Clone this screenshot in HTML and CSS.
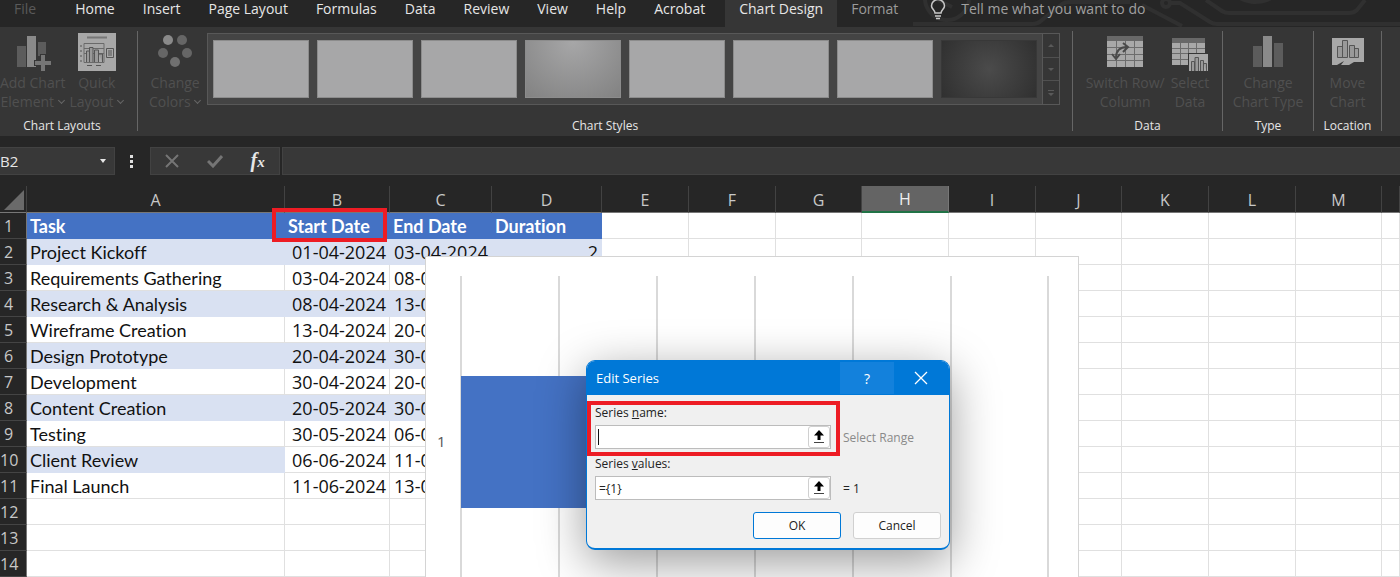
FILE: index.html
```html
<!DOCTYPE html>
<html lang="en">
<head>
    <title>Book1 - Excel</title>
    <meta charset="UTF-8">
    <meta name="viewport" content="width=device-width, initial-scale=1">
    <link rel="stylesheet" href="styles.css">
</head>
<body>
    <nav class="tabs">
        <svg class="circuit" width="490" height="27" viewBox="0 0 490 27" fill="none" stroke="#303030" stroke-width="4">
            <path d="M3 24h119q6 0 10-4l20-16q3-2 8-2h60"/>
            <path d="M15 -4a22 22 0 0 0 44 4"/>
            <path d="M28 0l14 7"/>
            <circle cx="256" cy="3" r="4"/>
            <path d="M232 5l40 21M260 3h10l30 19q3 2 7 2h184"/>
            <path d="M296 0l16 11q3 2 7 2h120q5 0 8-3l8-10"/>
            <path d="M320 -14a26 20 0 0 0 48 6z" fill="#303030"/>
        </svg>
        <a class="tab tab-file" href="#">File</a>
        <a class="tab tab-home" href="#">Home</a>
        <a class="tab" href="#">Insert</a>
        <a class="tab" href="#">Page Layout</a>
        <a class="tab" href="#">Formulas</a>
        <a class="tab" href="#">Data</a>
        <a class="tab" href="#">Review</a>
        <a class="tab" href="#">View</a>
        <a class="tab" href="#">Help</a>
        <a class="tab" href="#">Acrobat</a>
        <a class="tab tab-active" href="#">Chart Design</a>
        <a class="tab tab-dim" href="#">Format</a>
        <button class="tell-me">
            <svg width="16" height="20" viewBox="0 0 16 20" fill="none" stroke="#c8c8c8" stroke-width="1.5">
                <path d="M5 13c0-3-3.500-4-3.500-7a6.500 6.500 0 0 1 13 0c0 3-3.500 4-3.500 7zM5 16h6M6 18.500h4"/>
            </svg>
            <span>Tell me what you want to do</span>
        </button>
    </nav>

    <section class="ribbon">
        <div class="group group-layouts">
            <div class="group-items">
                <button class="tool">
                    <svg width="36" height="36" viewBox="0 0 36 36">
                        <path d="M2 12h9v21H2z" fill="#5c5c5c"/>
                        <path d="M12 2h9v31h-9z" fill="#8a8a8a"/>
                        <path d="M23 8h8v14h-8z" fill="#5c5c5c"/>
                        <path d="M25 20h6v6h6v6h-6v6h-6v-6h-6v-6h6z" fill="#363636"/>
                        <path d="M26 21h4v6h6v4h-6v6h-4v-6h-6v-4h6z" fill="#767676"/>
                    </svg>
                    <span>Add Chart<br>Element <i class="caret"></i></span>
                </button>
                <button class="tool">
                    <svg width="38" height="38" viewBox="0 0 38 38" fill="none" stroke="#555">
                        <path d="M0 0h38v38H0z" fill="#a8a8a8" stroke="none"/>
                        <path d="M9 4.500h20" stroke="#777" stroke-width="2"/>
                        <path d="M6 10.500h20v19H6zM6 15.500h20M6 20.500h20" stroke="#6a6a6a"/>
                        <path d="M8.500 29v-11h3v11M11.500 29V14.500h3.500V29M16.500 29V17h4v12M20.500 21h4v8" fill="#999"/>
                        <path d="M28.500 15.500h7v9h-7zM30 18h4M30 20h4M30 22h4M2 13h2M2 18h2M2 23h2M2 28h2M9 32.500h5M18 32.500h5"/>
                    </svg>
                    <span>Quick<br>Layout <i class="caret"></i></span>
                </button>
            </div>
            <h2 class="group-title">Chart Layouts</h2>
        </div>

        <div class="group group-styles">
            <div class="group-items">
                <button class="tool">
                    <svg width="36" height="36" viewBox="0 0 36 36" fill="#666">
                        <circle cx="11" cy="6" r="5" fill="#8a8a8a"/>
                        <circle cx="25" cy="6" r="5"/>
                        <circle cx="6" cy="19" r="5"/>
                        <circle cx="30" cy="19" r="5"/>
                        <circle cx="18" cy="28" r="5" fill="#707070"/>
                    </svg>
                    <span>Change<br>Colors <i class="caret"></i></span>
                </button>
                <div class="gallery">
                    <div class="thumbs">
                        <button class="thumb" aria-label="Style 1"></button>
                        <button class="thumb" aria-label="Style 2"></button>
                        <button class="thumb" aria-label="Style 3"></button>
                        <button class="thumb thumb-gradient" aria-label="Style 4"></button>
                        <button class="thumb" aria-label="Style 5"></button>
                        <button class="thumb" aria-label="Style 6"></button>
                        <button class="thumb" aria-label="Style 7"></button>
                        <button class="thumb thumb-dark" aria-label="Style 8"></button>
                    </div>
                    <div class="gallery-scroll">
                        <button aria-label="Up"><svg width="8" height="8" viewBox="0 0 8 8" fill="#5a5a5a"><path d="M1 6h6L4 3z"/></svg></button>
                        <button aria-label="Down"><svg width="8" height="8" viewBox="0 0 8 8" fill="#5a5a5a"><path d="M1 3h6L4 6z"/></svg></button>
                        <button aria-label="More"><svg width="8" height="8" viewBox="0 0 8 8" fill="#5a5a5a"><path d="M1 1h6v1H1zM1 4h6L4 7z"/></svg></button>
                    </div>
                </div>
            </div>
            <h2 class="group-title">Chart Styles</h2>
        </div>

        <div class="group group-data">
            <div class="group-items">
                <button class="tool">
                    <svg width="36" height="36" viewBox="0 0 36 36" fill="none">
                        <path d="M0 2h36v31H0z" fill="#a8a8a8"/>
                        <path d="M0 2h36v5H0z" fill="#686868"/>
                        <path d="M0 13.500h36M0 20.500h36M0 26.500h36M9.500 7v26M18.500 7v26M27.500 7v26" stroke="#6c6c6c"/>
                        <path d="M9 24q0-11 11-11M5 20l4 5 4-5M16 9l5 4-5 5" stroke="#4a4a4a" stroke-width="2"/>
                    </svg>
                    <span>Switch Row/<br>Column</span>
                </button>
                <button class="tool">
                    <svg width="36" height="36" viewBox="0 0 36 36" fill="none">
                        <path d="M0 4h33v27H0z" fill="#a8a8a8"/>
                        <path d="M0 4h33v5H0z" fill="#686868"/>
                        <path d="M0 14.500h33M0 19.500h33M0 25.500h33M8.500 9v22M16.500 9v22M24.500 9v22" stroke="#6c6c6c"/>
                        <path d="M16 19h20v18H16z" fill="#363636"/>
                        <path d="M17 20h19v17H17z" fill="#a8a8a8"/>
                        <path d="M19.500 37V27.500h3V37M23 37V23.500h3.500V37M28.500 37V26.500h3V37M31.500 29.500h3V37" stroke="#555" fill="#999"/>
                    </svg>
                    <span>Select<br>Data</span>
                </button>
            </div>
            <h2 class="group-title">Data</h2>
        </div>

        <div class="group group-type">
            <div class="group-items">
                <button class="tool">
                    <svg width="36" height="36" viewBox="0 0 36 36">
                        <path d="M3 12h9v21H3z" fill="#5c5c5c"/>
                        <path d="M13 2h9v31h-9z" fill="#8a8a8a"/>
                        <path d="M24 9h9v24h-9z" fill="#5c5c5c"/>
                    </svg>
                    <span>Change<br>Chart Type</span>
                </button>
            </div>
            <h2 class="group-title">Type</h2>
        </div>

        <div class="group group-location">
            <div class="group-items">
                <button class="tool">
                    <svg width="36" height="36" viewBox="0 0 36 36" fill="none">
                        <path d="M2 4h32v24H24l-5 3h-8l3-4-7 4H2z" fill="#a8a8a8"/>
                        <path d="M7.500 23.500v-11h5v11zM12.500 23.500v-17h5v17zM19.500 23.500v-12h5v12zM24.500 23.500v-9h4v9z" stroke="#555" fill="#999"/>
                    </svg>
                    <span>Move<br>Chart</span>
                </button>
            </div>
            <h2 class="group-title">Location</h2>
        </div>
    </section>

    <section class="formula-bar">
        <button class="name-box">B2<i class="arrow"></i></button>
        <svg class="dots" width="4" height="14" viewBox="0 0 4 14" fill="#e0e0e0"><path d="M0 1h3v3H0zM0 6h3v3H0zM0 11h3v3H0z"/></svg>
        <div class="formula-tools">
            <button aria-label="Cancel entry"><svg width="14" height="14" viewBox="0 0 14 14" stroke="#757575" stroke-width="2"><path d="M1 1l12 12M13 1L1 13"/></svg></button>
            <button aria-label="Enter"><svg width="16" height="14" viewBox="0 0 16 14" fill="none" stroke="#757575" stroke-width="3"><path d="M1 7l5 5L15 2"/></svg></button>
            <button class="fx" aria-label="Insert function">f<small>x</small></button>
        </div>
        <input class="formula-input" type="text" aria-label="Formula">
    </section>

    <main class="sheet">
        <table class="grid">
            <colgroup>
                <col class="col-head"><col class="col-a"><col class="col-b"><col class="col-c"><col class="col-d">
                <col class="col-n"><col class="col-n"><col class="col-s"><col class="col-n"><col class="col-n"><col class="col-s"><col class="col-n"><col class="col-n"><col class="col-s"><col>
            </colgroup>
            <thead>
                <tr>
                    <th class="corner"><svg width="20" height="20" viewBox="0 0 20 20" fill="#6a6a6a"><path d="M20 0v20H0z"/></svg></th>
                    <th>A</th><th>B</th><th>C</th><th>D</th><th>E</th><th>F</th><th>G</th><th class="selected">H</th><th>I</th><th>J</th><th>K</th><th>L</th><th>M</th><th></th>
                </tr>
            </thead>
            <tbody id="rows"></tbody>
        </table>

        <div class="mark mark-header"></div>

        <div class="chart">
            <span class="chart-label">1</span>
            <div class="plot">
                <div class="bar"></div>
            </div>
        </div>

        <form class="dialog">
            <header class="dialog-title">
                <h1>Edit Series</h1>
                <button type="button" class="help">?</button>
                <button type="button" class="close" aria-label="Close"><svg width="14" height="14" viewBox="0 0 14 14" stroke="#fff" stroke-width="1.300"><path d="M1 1l12 12M13 1L1 13"/></svg></button>
            </header>
            <div class="dialog-body">
                <label for="series-name">Series <u>n</u>ame:</label>
                <div class="field-row">
                    <div class="field">
                        <i class="cursor"></i>
                        <input id="series-name" type="text">
                        <button type="button" aria-label="Pick range"><svg width="12" height="14" viewBox="0 0 12 14"><path d="M6 0l5 5.500H7.500V10h-3V5.500H1z"/><path d="M1 12h10v1H1z" fill="#444"/></svg></button>
                    </div>
                    <span class="hint">Select Range</span>
                </div>
                <label for="series-values">Series <u>v</u>alues:</label>
                <div class="field-row">
                    <div class="field">
                        <input id="series-values" type="text" value="={1}">
                        <button type="button" aria-label="Pick range"><svg width="12" height="14" viewBox="0 0 12 14"><path d="M6 0l5 5.500H7.500V10h-3V5.500H1z"/><path d="M1 12h10v1H1z" fill="#444"/></svg></button>
                    </div>
                    <span>= 1</span>
                </div>
                <div class="dialog-buttons">
                    <button type="button" class="btn btn-default">OK</button>
                    <button type="button" class="btn">Cancel</button>
                </div>
            </div>
            <div class="mark mark-name"></div>
        </form>
    </main>

    <script src="sheet.js"></script>
</body>
</html>
```
FILE: styles.css
```css
* {
    box-sizing: border-box;
}
body {
    margin: 0;
    height: 100vh;
    display: flex;
    flex-direction: column;
    overflow: hidden;
    background-color: #262626;
    color: #e6e6e6;
    font-family: "Open Sans", "Noto Sans", sans-serif;
    font-size: 14px;
}
button, input {
    font: inherit;
    color: inherit;
    background: none;
    border: 0;
    padding: 0;
    margin: 0;
}

/* Tabs */
.tabs {
    position: relative;
    isolation: isolate;
    display: flex;
    height: 27px;
    flex: none;
    overflow: hidden;
}
.circuit {
    position: absolute;
    top: 0;
    left: 910px;
    z-index: -1;
}
.tab {
    padding: 0 14px;
    line-height: 18px;
    white-space: nowrap;
    color: #e6e6e6;
    text-decoration: none;
}
.tab-file {
    color: #5a5a5a;
}
.tab-home {
    padding-left: 25px;
}
.tab-active {
    margin-left: 6px;
    background-color: #363636;
}
.tab-dim {
    color: #9a9a9a;
}
.tell-me {
    display: flex;
    gap: 15px;
    height: 18px;
    margin-left: 18px;
    line-height: 18px;
    color: #a0a0a0;
}

/* Ribbon */
.ribbon {
    display: flex;
    height: 109px;
    flex: none;
    padding-top: 4px;
    background-color: #363636;
}
.group {
    display: flex;
    flex-direction: column;
    justify-content: space-between;
    height: 100px;
    border-right: 1px solid #666;
}
.group-items {
    display: flex;
    justify-content: center;
}
.group-title {
    margin: 0;
    font-size: 12px;
    font-weight: 400;
    line-height: 10px;
    text-align: center;
}
.group-layouts {
    width: 138px;
    padding-right: 13px;
}
.group-styles {
    flex: 1;
}
.group-styles .group-items {
    justify-content: flex-start;
    padding-left: 8px;
}
.group-data {
    width: 150px;
}
.group-type {
    width: 91px;
}
.group-location {
    width: 68px;
    margin-right: 18px;
}
.tool {
    display: flex;
    flex-direction: column;
    align-items: center;
    gap: 2px;
    padding: 2px 3px 0;
    color: #505050;
    line-height: 19px;
    white-space: nowrap;
}
.group-layouts .tool {
    padding: 2px 2px 0;
}
.tool svg {
    height: 38px;
    overflow: visible;
}
.caret {
    display: inline-block;
    width: 5px;
    height: 5px;
    margin: 0 1px 4px 1px;
    border-right: 1px solid #666;
    border-bottom: 1px solid #666;
    transform: rotate(45deg);
}
.gallery {
    display: flex;
    flex: 1;
    height: 72px;
    margin: 2px 12px 0 3px;
    border: 1px solid #585858;
}
.thumbs {
    display: flex;
    flex: 1;
    gap: 8px;
    padding: 6px 5px;
    background-color: #444;
}
.thumb {
    flex: 1;
    height: 58px;
    background-color: #a7a7a8;
    border: 1px solid #8c8c8c;
}
.thumb-gradient {
    background: radial-gradient(circle at 50% 0, #a7a7a8, #828282);
}
.thumb-dark {
    background: radial-gradient(circle, #4b4b4b, #303030);
    border-color: #383838;
}
.gallery-scroll {
    display: flex;
    flex-direction: column;
    width: 17px;
    border-left: 1px solid #585858;
}
.gallery-scroll button {
    display: flex;
    flex: 1;
    align-items: center;
    justify-content: center;
}
.gallery-scroll button + button {
    border-top: 1px solid #505050;
}

/* Formula bar */
.formula-bar {
    display: flex;
    align-items: center;
    height: 50px;
    flex: none;
}
.name-box, .formula-tools, .formula-input {
    height: 28px;
    background-color: #383838;
    border: 1px solid #424242;
}
.name-box {
    display: flex;
    align-items: center;
    justify-content: space-between;
    width: 115px;
    padding-right: 8px;
    border-left: 0;
    font-size: 15px;
}
.arrow {
    border: 3px solid transparent;
    border-top: 4px solid #e6e6e6;
    border-bottom: 0;
}
.dots {
    margin: 0 16px 0 15px;
}
.formula-tools {
    display: flex;
    align-items: center;
    width: 130px;
}
.formula-tools button {
    display: flex;
    flex: 1;
    justify-content: center;
}
.formula-tools .fx {
    align-items: baseline;
    font: italic bold 20px/22px "Liberation Serif", serif;
}
.fx small {
    font-size: 15px;
}
.formula-input {
    flex: 1;
    min-width: 0;
    margin-left: 2px;
    border-right: 0;
}

/* Sheet */
.sheet {
    position: relative;
    flex: 1;
    overflow: hidden;
}
.grid {
    width: 100%;
    table-layout: fixed;
    border-spacing: 0;
    color: #111;
    font-family: Lato, sans-serif;
    font-size: 18px;
    font-variant-ligatures: none;
    line-height: 23px;
    background-color: #fff;
}
.col-head {
    width: 27px;
}
.col-a {
    width: 258px;
}
.col-b {
    width: 105px;
}
.col-c {
    width: 102px;
}
.col-d {
    width: 110px;
}
.col-n {
    width: 87px;
}
.col-s {
    width: 86px;
}
.grid th {
    height: 26px;
    padding: 2px 0 0;
    font-family: "Open Sans", sans-serif;
    font-size: 16px;
    font-weight: 400;
    color: #c8c8c8;
    background-color: #262626;
}
.grid thead th {
    height: 27px;
    border-right: 1px solid #424242;
    border-bottom: 1px solid #777;
}
.grid thead .selected {
    background-color: #646464;
    color: #f0f0f0;
    border-right-color: #777;
    border-bottom: 2px solid #217346;
}
.grid tbody th {
    padding-right: 9px;
    border-right: 1px solid #777;
    border-bottom: 1px solid #444;
}
.corner svg {
    display: block;
    margin-left: 4px;
}
.grid td {
    height: 26px;
    padding: 2px 3px 0;
    border-right: 1px solid #e0e0e0;
    border-bottom: 1px solid #e0e0e0;
    white-space: nowrap;
    overflow: hidden;
}
.grid td.num {
    font-family: "Open Sans", sans-serif;
    text-align: right;
}
.grid td.head {
    color: #fff;
    font-weight: 700;
    background-color: #4472c4;
    border-color: #4472c4;
}
.grid td.band {
    background-color: #d9e1f2;
    border-color: #d9e1f2;
}

/* Red callout frames */
.mark {
    position: absolute;
    border: 4px solid #ed1c24;
    pointer-events: none;
}
.mark-header {
    top: 22px;
    left: 272px;
    width: 115px;
    height: 34px;
}
.mark-name {
    top: 40px;
    left: 0;
    width: 253px;
    height: 55px;
}

/* Chart */
.chart {
    position: absolute;
    top: 70px;
    left: 425px;
    display: flex;
    width: 654px;
    height: 360px;
    padding: 19px 29px 0 10px;
    background-color: #fff;
    border: 1px solid #d4d4d4;
}
.chart-label {
    width: 24px;
    padding: 155px 0 0 1px;
    color: #555;
    font-size: 15px;
    line-height: 20px;
}
.plot {
    flex: 1;
    padding: 100px 0 0 1px;
    border-right: 2px solid #d9d9d9;
    background: repeating-linear-gradient(to right, #d9d9d9 0 2px, transparent 2px 98px);
}
.bar {
    width: 60%;
    height: 132px;
    background-color: #4472c4;
}

/* Dialog */
.dialog {
    position: absolute;
    top: 174px;
    left: 586px;
    width: 364px;
    background-color: #f0f0f0;
    border: 1px solid #0078d7;
    border-bottom-width: 2px;
    border-radius: 9px;
    box-shadow: 0 12px 48px rgba(0, 0, 0, 0.4);
    color: #222;
    font-size: 12px;
}
.dialog-title {
    display: flex;
    align-items: center;
    height: 34px;
    padding: 0 1px 0 9px;
    color: #fff;
    background-color: #0078d7;
    border-radius: 8px 8px 0 0;
}
.dialog-title h1 {
    flex: 1;
    margin: 0;
    font-size: 13px;
    font-weight: 400;
}
.dialog-title button {
    display: flex;
    align-items: center;
    justify-content: center;
    width: 54px;
    height: 32px;
}
.dialog-title .help {
    font-size: 14px;
    background-color: #1381dc;
}
.dialog-body {
    padding: 8px 8px 9px;
}
.dialog-body label {
    display: block;
    line-height: 20px;
}
.field-row {
    display: flex;
    align-items: center;
    gap: 12px;
    height: 24px;
    margin: 2px 0 5px;
}
.field {
    display: flex;
    width: 236px;
    height: 24px;
    background-color: #fff;
    border: 1px solid #bcbcbc;
}
.field input {
    flex: 1;
    min-width: 0;
    padding-left: 3px;
    outline: none;
}
.cursor {
    width: 1px;
    margin: 3px 0 3px 2px;
    background-color: #111;
}
.field button {
    display: flex;
    align-items: center;
    justify-content: center;
    width: 22px;
    border: 1px solid #d0d0d0;
    border-radius: 3px;
}
.hint {
    color: #8a8a8a;
}
.dialog-buttons {
    display: flex;
    justify-content: flex-end;
    gap: 12px;
    margin-top: 12px;
}
.btn {
    width: 88px;
    height: 27px;
    background-color: #fdfdfd;
    border: 1px solid #d0d0d0;
    border-radius: 3px;
}
.btn-default {
    border-color: #0078d7;
}
```
FILE: sheet.js
```js
const data = [
    ["Task", "Start Date", "End Date", "Duration"],
    ["Project Kickoff", "01-04-2024", "03-04-2024", "2"],
    ["Requirements Gathering", "03-04-2024", "08-04-2024"],
    ["Research & Analysis", "08-04-2024", "13-04-2024"],
    ["Wireframe Creation", "13-04-2024", "20-04-2024"],
    ["Design Prototype", "20-04-2024", "30-04-2024"],
    ["Development", "30-04-2024", "20-05-2024"],
    ["Content Creation", "20-05-2024", "30-05-2024"],
    ["Testing", "30-05-2024", "06-06-2024"],
    ["Client Review", "06-06-2024", "11-06-2024"],
    ["Final Launch", "11-06-2024", "13-06-2024"]
];

const tableBody = document.getElementById("rows");

for (let r = 0; r < 14; r++) {
    const row = document.createElement("tr");
    const head = document.createElement("th");
    head.textContent = r + 1;
    row.appendChild(head);

    for (let c = 0; c < 14; c++) {
        const cell = document.createElement("td");
        if (data[r] && c < 4) {
            cell.textContent = data[r][c] || "";
            if (r === 0) cell.className = "head";
            else if (c > 0) cell.className = "num";
            // banded rows; row 10 is only filled in column A
            if (r % 2 === 1 && (r < 9 || c === 0)) cell.classList.add("band");
        }
        row.appendChild(cell);
    }
    tableBody.appendChild(row);
}
```
